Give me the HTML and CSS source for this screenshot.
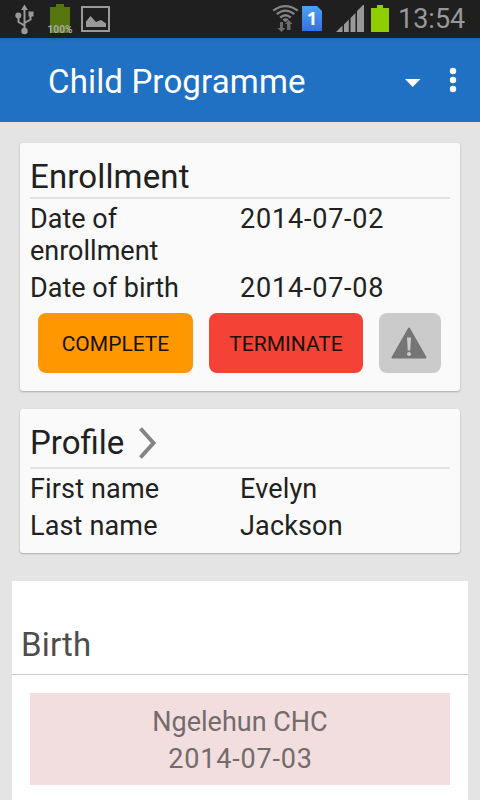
FILE: index.html
```
<!DOCTYPE html>
<html lang="en">

<head>
	<meta charset="utf-8">
	<title>Child Programme</title>
	<link rel="stylesheet" href="styles.css">
</head>

<body>

	<div class="status-bar">
		<svg class="status-icons" width="120" height="38" viewBox="0 0 120 38">
			<!-- usb -->
			<g fill="none" stroke="#999" stroke-width="2">
				<path d="M24.500 8V30M24.500 25.500L18.500 22V16M24.500 23L30.500 19.500V14"/>
			</g>
			<path d="M24.500 4.500L28 10H21zM28.500 11.500h5v5h-5z" fill="#999"/>
			<circle cx="18.300" cy="15.500" r="3" fill="#999"/>
			<circle cx="24.500" cy="31" r="3.200" fill="#999"/>
			<!-- battery -->
			<path d="M56 4h8v3h6v26H50V7h6z" fill="#55760f"/>
			<text class="percent" x="47.500" y="32.500" textLength="25" lengthAdjust="spacingAndGlyphs">100%</text>
			<!-- picture -->
			<rect x="82" y="7" width="27" height="24" fill="none" stroke="#999" stroke-width="2"/>
			<path d="M86 27V21.500L90.500 16L96 22L101 20L106 23.500V27z" fill="#999"/>
		</svg>
		<svg class="status-icons" width="124" height="38" viewBox="268 0 124 38">
			<!-- wifi -->
			<g fill="none" stroke="#848484" stroke-width="2.300">
				<path d="M273.200 10.700Q285.500 1.500 297.800 10.700"/>
				<path d="M276.700 14.200Q285.500 7 294.300 14.200"/>
				<path d="M280.200 17.600Q285.500 13 290.800 17.600"/>
			</g>
			<path d="M282.500 19.500Q285.500 17 288.500 19.500L285.500 22.300z" fill="#848484"/>
			<path d="M280 22h3v6h2.500l-4 4-4-4h2.500zM287 30h3.500v-6h2l-3.800-4-3.700 4h2z" fill="#6c6c6c"/>
			<!-- sim card -->
			<defs>
				<linearGradient id="sim" x1="0" y1="0" x2="0" y2="1">
					<stop offset="0" stop-color="#4ba2ee"/>
					<stop offset="1" stop-color="#3471e6"/>
				</linearGradient>
			</defs>
			<path d="M302 6h15l5 5v20h-20z" fill="url(#sim)"/>
			<text class="sim-number" x="306.700" y="25">1</text>
			<!-- signal -->
			<path d="M336 32L342.500 25.500V32zM344 24.500L348.800 19.500V32H344zM350.500 18L355.500 13V32H350.500zM357 11L363 5H364V32H357z" fill="#999"/>
			<!-- battery -->
			<path d="M377 5h6v3h6v24h-18V8h6z" fill="#8fce00"/>
		</svg>
		<span class="clock">13:54</span>
	</div>

	<div class="action-bar">
		<h1>Child Programme</h1>
		<svg width="68" height="40" viewBox="398 60 68 40" fill="#fff">
			<path d="M405 79h15.500L412.700 87z"/>
			<circle cx="453" cy="71" r="3.200"/>
			<circle cx="453" cy="80" r="3.200"/>
			<circle cx="453" cy="89" r="3.200"/>
		</svg>
	</div>

	<div class="content">
		<div class="card enrollment">
			<h2>Enrollment</h2>
			<div class="row"><span>Date of enrollment</span><span class="date">2014-07-02</span></div>
			<div class="row"><span>Date of birth</span><span class="date">2014-07-08</span></div>
			<div class="buttons">
				<button class="complete">COMPLETE</button>
				<button class="terminate">TERMINATE</button>
				<button class="warning">
					<svg width="38" height="32" viewBox="0 0 38 32">
						<path d="M18 1.500L34.500 30.500H1.500z" fill="#757575" stroke="#757575" stroke-width="2" stroke-linejoin="round"/>
						<path d="M16 10.500h4l-.8 13h-2.400z" fill="#cbcbcb"/>
						<circle cx="18" cy="27" r="2" fill="#cbcbcb"/>
					</svg>
				</button>
			</div>
		</div>

		<div class="card profile">
			<h2>Profile
				<svg width="20" height="32" viewBox="0 0 20 32">
					<path d="M2.500 1.500L15.500 16L2.500 30.500" fill="none" stroke="#858585" stroke-width="4"/>
				</svg>
			</h2>
			<div class="row"><span>First name</span><span>Evelyn</span></div>
			<div class="row"><span>Last name</span><span>Jackson</span></div>
		</div>
	</div>

	<div class="stage">
		<h2>Birth</h2>
		<div class="event">
			<div>Ngelehun CHC</div>
			<div class="date">2014-07-03</div>
		</div>
	</div>

</body>

</html>
```
FILE: styles.css
```
body {
	margin: 0;
	height: 800px;
	overflow: hidden;
	background-color: #e4e4e4;
	color: #212121;
	font-family: Roboto, sans-serif;
	font-size: 27px;
	line-height: 32px;
}

h1,
h2 {
	margin: 0;
	font-size: 33px;
	font-weight: 400;
	letter-spacing: 0.15px;
}

svg {
	display: block;
}

.status-bar {
	display: flex;
	align-items: center;
	height: 38px;
	background-color: #1f1f1f;
	color: #999;
}

.status-icons + .status-icons {
	margin-left: 148px;
}

.percent {
	font: bold 10px Roboto, sans-serif;
	fill: #aaa;
}

.sim-number {
	font: bold 18px "Open Sans", sans-serif;
	fill: #fff;
}

.clock {
	margin-left: 6px;
}

.action-bar {
	display: flex;
	align-items: center;
	justify-content: space-between;
	box-sizing: border-box;
	height: 84px;
	padding: 0 14px 0 48px;
	background: linear-gradient(#1e67b4, #2070c4 5px);
	color: #fff;
}

.action-bar h1 {
	padding-top: 4px;
}

.content {
	display: flex;
	flex-direction: column;
	gap: 18px;
	padding: 21px 20px 28px;
}

.card {
	box-sizing: border-box;
	padding: 14px 10px 0;
	background-color: #fafafa;
	border-radius: 3px;
	box-shadow: 0 1px 2px rgba(0, 0, 0, 0.25);
}

.card h2 {
	height: 40px;
	line-height: 39px;
	margin-bottom: 4px;
	border-bottom: 2px solid #e4e4e4;
}

.enrollment {
	height: 248px;
}

.profile {
	height: 144px;
}

.profile h2 {
	display: flex;
	align-items: flex-start;
	gap: 13px;
	height: 44px;
	letter-spacing: 0;
}

.profile h2 svg {
	margin-top: 4px;
	margin-left: 1px;
}

.row {
	display: grid;
	grid-template-columns: 210px 210px;
	margin-bottom: 5px;
}

.row span:first-child {
	padding-right: 40px;
}

.profile .row {
	letter-spacing: 0.15px;
}

.row .date,
.event .date {
	letter-spacing: 0.8px;
}

.event .date {
	padding-left: 1px;
}

.buttons {
	display: flex;
	gap: 16px;
	padding: 4px 9px 0 8px;
}

button {
	height: 60px;
	padding: 1px 0 0;
	border: none;
	border-radius: 8px;
	color: #1a1005;
	font-family: Roboto, sans-serif;
	font-size: 21px;
}

.complete {
	width: 155px;
	background-color: #ff9800;
}

.terminate {
	width: 154px;
	background-color: #f44336;
}

.warning {
	display: flex;
	align-items: center;
	justify-content: center;
	width: 62px;
	padding: 0;
	background-color: #cbcbcb;
}

.stage {
	height: 219px;
	margin: 0 12px;
	background-color: #fff;
}

.stage h2 {
	height: 49px;
	padding: 44px 0 0 9px;
	line-height: 39px;
	border-bottom: 1px solid #ccc;
	color: #4d4d4d;
}

.event {
	display: flex;
	flex-direction: column;
	gap: 5px;
	height: 79px;
	margin: 18px 18px 0;
	padding-top: 13px;
	background-color: #f2dede;
	color: #746b6b;
	text-align: center;
}
```
